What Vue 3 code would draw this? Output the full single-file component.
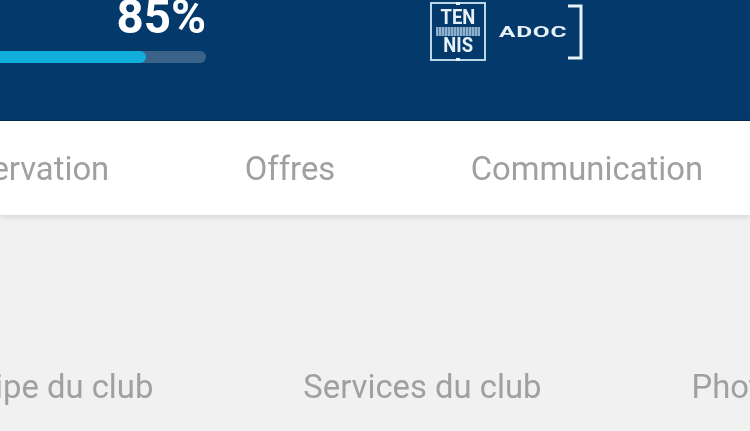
<template>
  <div class="page">
    <header class="hero">
      <div class="hero-row">
        <div class="progress">
          <div class="percent">{{ percent }}%</div>
          <div class="track">
            <div class="fill" :style="{ width: fillWidth + 'px' }"></div>
          </div>
        </div>
        <div class="logo">
          <div class="tennis">
            <span>TEN</span>
            <i class="net"></i>
            <span>NIS</span>
          </div>
          <span class="adoc">ADOC</span>
          <svg class="bracket" width="16" height="56" viewBox="0 0 16 56">
            <path d="M1 2H14V54H1" fill="none" stroke="#e8f1f8" stroke-width="3" />
          </svg>
        </div>
      </div>
    </header>

    <nav class="main-nav">
      <span v-for="item in navItems" :key="item">{{ item }}</span>
    </nav>

    <div class="sub-nav">
      <span v-for="item in subItems" :key="item">{{ item }}</span>
    </div>
  </div>
</template>

<script setup>
const percent = 85;
const fillWidth = 146;
const navItems = ["Réservation", "Offres", "Communication"];
const subItems = ["Équipe du club", "Services du club", "Photos"];
</script>

<style>
html,
body {
  margin: 0;
  overflow: hidden;
  background: #f1f1f1;
}
</style>

<style scoped>
.page {
  width: 750px;
  height: 431px;
  overflow: hidden;
  background: #f1f1f1;
  font-family: Roboto, "Liberation Sans", sans-serif;
}

.hero {
  height: 121px;
  background: #033a6b;
  border-bottom: 1px solid #022a50;
  box-sizing: border-box;
}

.hero-row {
  display: flex;
  align-items: flex-start;
}

.progress {
  width: 206px;
  display: flex;
  flex-direction: column;
  align-items: flex-end;
}

.percent {
  margin-top: -6px;
  height: 57px;
  line-height: 46px;
  font-size: 47.5px;
  font-weight: 700;
  color: #fff;
  filter: blur(0.5px);
}

.track {
  width: 206px;
  height: 12px;
  border-radius: 0 6px 6px 0;
  background: #3b6289;
}

.fill {
  height: 100%;
  border-radius: 0 6px 6px 0;
  background: #12aedb;
}

.logo {
  margin-left: 224px;
  margin-top: 2px;
  display: flex;
  align-items: center;
  color: #e8f1f8;
  filter: blur(0.5px);
}

.tennis {
  position: relative;
  width: 56px;
  height: 59px;
  box-sizing: border-box;
  border: 2px solid #bcd6ea;
  display: flex;
  flex-direction: column;
  align-items: center;
  justify-content: center;
  font-size: 20px;
  line-height: 19px;
  font-weight: 700;
}

.tennis span {
  display: inline-block;
  transform: scaleX(0.92);
}

.tennis::before,
.tennis::after {
  content: "";
  position: absolute;
  left: 24px;
  width: 4px;
  height: 3px;
  background: #e8f1f8;
}

.tennis::before {
  top: -2px;
}

.tennis::after {
  bottom: -2px;
}

.net {
  width: 44px;
  height: 9px;
  background: repeating-linear-gradient(90deg, #8fb0cc 0 2px, #4f7da3 2px 3px);
}

.adoc {
  margin-left: 13px;
  width: 68px;
  font-size: 14px;
  font-weight: 700;
  letter-spacing: 0.4px;
  transform: scaleX(1.75);
  transform-origin: left center;
}

.bracket {
  flex-shrink: 0;
}

.main-nav {
  height: 94px;
  box-sizing: border-box;
  padding: 2px 47px 0 0;
  background: #fff;
  box-shadow: 0 2px 6px rgba(0, 0, 0, 0.12);
  display: flex;
  align-items: center;
  justify-content: flex-end;
  gap: 135.5px;
  font-size: 32.8px;
  color: #a0a0a0;
  white-space: nowrap;
}

.main-nav span,
.sub-nav span {
  filter: blur(0.4px);
}

.sub-nav {
  margin-top: 152px;
  margin-left: -60px;
  display: flex;
  gap: 150px;
  font-size: 32.8px;
  line-height: 40px;
  color: #a0a0a0;
  white-space: nowrap;
}
</style>
